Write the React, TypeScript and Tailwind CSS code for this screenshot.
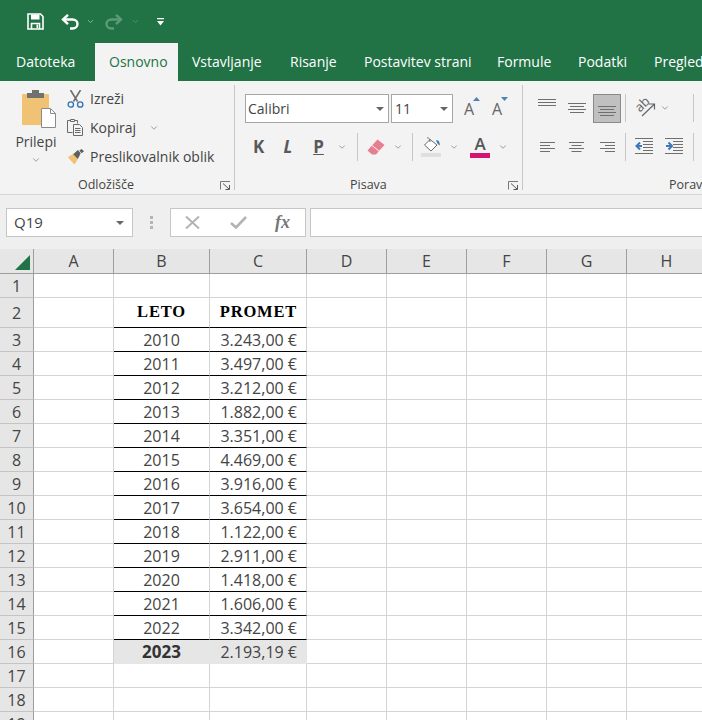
import { ChevronDown } from "lucide-react";

const ui = "font-['Open_Sans','Noto_Sans',sans-serif]";

const tabs = [
  { label: "Datoteka", w: "w-[95px]", pl: "pl-[16px]" },
  { label: "Osnovno", w: "w-[83px]", pl: "pl-[14px]", active: true },
  { label: "Vstavljanje", w: "w-[98px]", pl: "pl-[14px]" },
  { label: "Risanje", w: "w-[74px]", pl: "pl-[14px]" },
  { label: "Postavitev strani", w: "w-[133px]", pl: "pl-[14px]" },
  { label: "Formule", w: "w-[81px]", pl: "pl-[14px]" },
  { label: "Podatki", w: "w-[76px]", pl: "pl-[14px]" },
  { label: "Pregled", w: "w-[62px]", pl: "pl-[14px]" },
];

const rows: [string, string][] = [
  ["2010", "3.243,00 €"],
  ["2011", "3.497,00 €"],
  ["2012", "3.212,00 €"],
  ["2013", "1.882,00 €"],
  ["2014", "3.351,00 €"],
  ["2015", "4.469,00 €"],
  ["2016", "3.916,00 €"],
  ["2017", "3.654,00 €"],
  ["2018", "1.122,00 €"],
  ["2019", "2.911,00 €"],
  ["2020", "1.418,00 €"],
  ["2021", "1.606,00 €"],
  ["2022", "3.342,00 €"],
];

const columns = [
  { label: "A", w: "w-[80px]" },
  { label: "B", w: "w-[96px]" },
  { label: "C", w: "w-[97px]" },
  { label: "D", w: "w-[80px]" },
  { label: "E", w: "w-[80px]" },
  { label: "F", w: "w-[80px]" },
  { label: "G", w: "w-[80px]" },
  { label: "H", w: "w-[80px]" },
];

function Chev({ className = "" }: { className?: string }) {
  return <ChevronDown className={"h-[10px] w-[10px] text-[#666] " + className} strokeWidth={1.5} />;
}

function Caret() {
  return <div className="h-0 w-0 border-x-[4px] border-t-[4px] border-x-transparent border-t-[#666]" />;
}

function Launcher({ className = "" }: { className?: string }) {
  return (
    <svg className={className} width="11" height="9" viewBox="0 0 11 9" fill="none" stroke="#777">
      <path d="M.5 8.500V.5H10" />
      <path d="M3 2.500l6 5.500M9.500 4v4.500h-4" stroke="#555" />
    </svg>
  );
}

function Sep({ className = "h-[105px]" }: { className?: string }) {
  return <div className={"w-px bg-[#c6c6c6] " + className} />;
}

function SaveIcon() {
  return (
    <svg width="17" height="17" viewBox="0 0 17 17" fill="none">
      <path d="M1 1h12.5L16 3.500V16H1z" stroke="#fff" strokeWidth="1.600" />
      <path d="M4 1.500h8.500v5H4z" fill="#fff" />
      <path d="M4.500 16v-5.500h8V16" stroke="#fff" strokeWidth="1.600" />
      <path d="M9.500 11.500h1.500V15H9.500z" fill="#fff" />
    </svg>
  );
}

function UndoIcon({ color, flip }: { color: string; flip?: boolean }) {
  return (
    <svg width="19" height="16" viewBox="0 0 19 16" fill="none" className={flip ? "-scale-x-100" : ""}>
      <path d="M2 5.500h9.500c3 0 5 2 5 4.500s-2 4.500-5 4.500H9" stroke={color} strokeWidth="2.400" />
      <path d="M7 .8 2 5.500l5 4.700" stroke={color} strokeWidth="2.400" />
    </svg>
  );
}

function CustomizeIcon() {
  return (
    <svg width="7" height="8" viewBox="0 0 7 8">
      <path d="M0 0h7v1.300H0zM0 3h7L3.500 7.500z" fill="#fff" />
    </svg>
  );
}

function PasteIcon() {
  return (
    <svg className="ml-[6px]" width="34" height="38" viewBox="0 0 34 38">
      <path d="M1 4h25a1 1 0 0 1 1 1v30H1a1 1 0 0 1-1-1V5a1 1 0 0 1 1-1z" fill="#f0c274" />
      <path d="M5 8h17V3h-5V0h-7v3H5z" fill="#73716f" />
      <path d="M19.500 18.500h9l5 5v14h-14z" fill="#fff" stroke="#8a8a8a" />
      <path d="M28.500 18.500v5h5" fill="none" stroke="#8a8a8a" />
    </svg>
  );
}

function ScissorsIcon() {
  return (
    <svg width="17" height="18" viewBox="0 0 17 18" fill="none">
      <path d="M3.500 0 10.500 11.500M13.500 0 6.500 11.500" stroke="#6d6d6d" strokeWidth="1.600" />
      <circle cx="3.800" cy="14.500" r="2.700" stroke="#2f70b5" strokeWidth="1.300" />
      <circle cx="13.200" cy="14.500" r="2.700" stroke="#2f70b5" strokeWidth="1.300" />
    </svg>
  );
}

function CopyIcon() {
  return (
    <svg width="17" height="17" viewBox="0 0 17 17" fill="none" stroke="#6a6a6a">
      <path d="M5.500 13.500H.5V1.500h3M7.500 1.500h3v3" />
      <path d="M3.500 2.500v-2h4v2z" />
      <path d="M6.500 5.500h6l3 3v8h-9z" fill="#f3f3f3" />
      <path d="M8 9.500h5.500M8 11.500h5.500M8 13.500h5.500" />
    </svg>
  );
}

function PainterIcon() {
  return (
    <svg width="18" height="16" viewBox="0 0 18 17">
      <path d="M.500 8.500 6.500 5 11 10.500 7.500 16.500C5 14 2 11 .500 8.500z" fill="#f0c274" />
      <path d="M6 5.500 11 1l3 3.500-3 6z" fill="#5f5f5f" />
      <path d="M12.500 1.500 15 0l2.500 2.500-2.500 2z" fill="#5f5f5f" />
    </svg>
  );
}

function GrowA({ down }: { down?: boolean }) {
  return (
    <div className="relative flex h-[17px] w-[16px] items-end justify-start">
      <span className="text-[16px] leading-[15px] font-medium text-[#666]">A</span>
      <svg className="absolute -top-[3px] right-0" width="7" height="4" viewBox="0 0 7 4">
        <path d={down ? "M0 0h7L3.500 4z" : "M0 4h7L3.500 0z"} fill="#4f81b5" />
      </svg>
    </div>
  );
}

function EraserIcon() {
  return (
    <svg width="18" height="16" viewBox="0 0 18 16">
      <path d="M10.500.5 17.500 6 12 12 5 6.500z" fill="#e67e90" />
      <path d="M5 6.500 12 12 9 15.500H5L.5 11.500z" fill="#e67e90" />
      <path d="M5 6.500 12 12" stroke="#f3f3f3" strokeWidth="1" />
    </svg>
  );
}

function BucketIcon() {
  return (
    <div className="flex flex-col items-center">
      <svg width="20" height="15" viewBox="0 0 20 15" fill="none">
        <path d="M9 2.500 16 8l-6 6-6.500-6z" fill="#fff" stroke="#6a6a6a" />
        <path d="M6 1c1.500-1 3 1 3 4" stroke="#6a6a6a" />
        <path d="M15 3.500c2-.8 4 1 3.800 5l-2-1.500z" fill="#3d79b8" />
      </svg>
      <div className="mt-[1px] h-[4px] w-[20px] bg-[#dfdfdf]" />
    </div>
  );
}

function Lines({ widths }: { widths: number[] }) {
  const w = Math.max(...widths);
  return (
    <svg className="block" width={w} height={widths.length * 3} stroke="#6f6f6f">
      {widths.map((x, i) => (
        <line key={i} x1={(w - x) / 2} x2={(w + x) / 2} y1={i * 3 + 0.5} y2={i * 3 + 0.5} />
      ))}
    </svg>
  );
}

function HAlign({ align }: { align: "l" | "c" | "r" }) {
  const wide = [15, 10, 15, 10];
  return (
    <svg className="block" width="15" height="11" stroke="#6f6f6f">
      {wide.map((x, i) => {
        const x1 = align === "l" ? 0 : align === "c" ? (15 - x) / 2 : 15 - x;
        return <line key={i} x1={x1} x2={x1 + x} y1={i * 3 + 0.5} y2={i * 3 + 0.5} />;
      })}
    </svg>
  );
}

function OrientIcon() {
  return (
    <svg width="21" height="19" viewBox="0 0 21 19" fill="none">
      <text x="0" y="11" fontSize="13" fill="#666" transform="rotate(-45 7 7)" className={ui}>ab</text>
      <path d="M7 18 19 6.500M14 6h5.500v5.500" stroke="#666" strokeWidth="1.200" />
    </svg>
  );
}

function IndentIcon({ right }: { right?: boolean }) {
  return (
    <svg width="18" height="16" viewBox="0 0 18 16" fill="none">
      <path d="M0 .5h18M0 15.500h18M8 3.500h10M8 6.500h10M8 9.500h10M8 12.500h10" stroke="#6f6f6f" />
      <path d={right ? "M1 8h5M3.500 4.500 7 8l-3.500 3.500" : "M7 8H2M5 4.500 1.500 8 5 11.500"} stroke="#3d79b8" strokeWidth="2" />
    </svg>
  );
}

function HeaderRow() {
  return (
    <div className="flex h-[25px] bg-[#e6e6e6] text-[16px] text-[#444]">
      <div className="flex w-[34px] shrink-0 items-end justify-end border-r border-b border-[#9e9e9e] pr-[3px] pb-[3px]">
        <div className="h-0 w-0 border-b-[15px] border-l-[15px] border-b-[#217346] border-l-transparent" />
      </div>
      {columns.map((c) => (
        <div key={c.label} className={"flex shrink-0 items-center justify-center border-r border-b border-[#9e9e9e] " + c.w}>
          {c.label}
        </div>
      ))}
    </div>
  );
}

type RowProps = {
  n: number;
  h?: string;
  b?: React.ReactNode;
  c?: React.ReactNode;
  ruled?: boolean;
  total?: boolean;
};

function SheetRow({ n, h = "h-[24px]", b, c, ruled, total }: RowProps) {
  const tableEdge = ruled ? "border-b-black" : "border-b-[#d4d4d4]";
  const fill = total ? "bg-[#e7e6e6] border-r-[#e7e6e6] border-b-[#e7e6e6]" : "border-r-[#d4d4d4] " + tableEdge;
  return (
    <div className={"flex " + h}>
      <div className="flex w-[34px] shrink-0 items-center justify-center border-r border-b border-r-[#9e9e9e] border-b-[#c4c4c4] bg-[#e6e6e6] text-[16px] text-[#444]">
        {n}
      </div>
      {columns.map((col, i) => {
        const inTable = i === 1 || i === 2;
        return (
          <div
            key={col.label}
            className={
              "flex shrink-0 items-center whitespace-nowrap border-r border-b " +
              col.w +
              " " +
              (inTable ? fill : "border-[#d4d4d4]") +
              " " +
              (i === 1 ? "justify-center" : "justify-end pr-[9px]")
            }
          >
            {i === 1 ? b : i === 2 ? c : null}
          </div>
        );
      })}
    </div>
  );
}

export default function App() {
  return (
    <div className={"h-[720px] w-[702px] overflow-hidden bg-white " + ui}>
      {/* title bar + tabs */}
      <div className="bg-[#217346]">
        <div className="flex h-[43px] items-center pl-[27px]">
          <SaveIcon />
          <div className="ml-[17px]">
            <UndoIcon color="#fff" />
          </div>
          <ChevronDown className="ml-[6px] h-[9px] w-[9px] text-[#a5c7b4]" />
          <div className="ml-[9px]">
            <UndoIcon color="#5d9a78" flip />
          </div>
          <ChevronDown className="ml-[8px] h-[9px] w-[9px] text-[#5d9a78]" />
          <div className="ml-[17px]">
            <CustomizeIcon />
          </div>
        </div>
        <div className="flex h-[38px] overflow-hidden text-[14px] text-white">
          {tabs.map((t) => (
            <div
              key={t.label}
              className={
                "flex shrink-0 items-center whitespace-nowrap pb-[2px] " + t.w + " " + t.pl + " " +
                (t.active ? "bg-[#f3f3f3] text-[#217346]" : "")
              }
            >
              {t.label}
            </div>
          ))}
        </div>
      </div>

      {/* ribbon */}
      <div className="flex h-[114px] overflow-hidden border-b border-[#d6d6d6] bg-[#f3f3f3] text-[14px] text-[#444]">
        <div className="flex w-[234px] shrink-0 flex-col">
          <div className="flex flex-1">
            <div className="flex w-[66px] flex-col items-center pt-[9px] pl-[6px]">
              <PasteIcon />
              <span className="mt-[4px] leading-[20px]">Prilepi</span>
              <Chev className="mt-[3px]" />
            </div>
            <div className="flex flex-col pt-[3px]">
              <div className="flex h-[29px] items-center">
                <div className="flex w-[24px] justify-start pl-[1px]"><ScissorsIcon /></div>
                Izreži
              </div>
              <div className="flex h-[29px] items-center">
                <div className="flex w-[24px] justify-start pl-[1px]"><CopyIcon /></div>
                Kopiraj
                <Chev className="ml-[13px]" />
              </div>
              <div className="flex h-[29px] items-center whitespace-nowrap">
                <div className="flex w-[24px] justify-start pl-[1px]"><PainterIcon /></div>
                Preslikovalnik oblik
              </div>
            </div>
          </div>
          <div className="flex h-[17px] items-center text-[12.5px]">
            <span className="ml-[78px]">Odložišče</span>
            <Launcher className="mr-[3px] ml-auto" />
          </div>
        </div>
        <div className="mt-[4px]"><Sep /></div>

        <div className="flex w-[287px] shrink-0 flex-col">
          <div className="flex flex-1 flex-col pt-[13px] pl-[10px]">
            <div className="flex items-center">
              <div className="flex h-[29px] w-[144px] items-center justify-between border border-[#a6a6a6] bg-white pr-[4px] pl-[2px]">
                Calibri
                <Caret />
              </div>
              <div className="ml-[2px] flex h-[29px] w-[62px] items-center justify-between border border-[#a6a6a6] bg-white pr-[4px] pl-[3px]">
                11
                <Caret />
              </div>
              <div className="ml-[11px]"><GrowA /></div>
              <div className="ml-[12px]"><GrowA down /></div>
            </div>
            <div className="mt-[10px] flex h-[28px] items-center text-[#595959]">
              <span className="ml-[8px] w-[10px] text-center text-[17px] font-bold">K</span>
              <span className="ml-[20px] w-[10px] text-center text-[17px] font-bold italic">L</span>
              <span className="ml-[20px] w-[11px] text-center text-[17px] font-bold underline">P</span>
              <Chev className="ml-[13px]" />
              <Sep className="ml-[10px] h-[28px]" />
              <div className="ml-[9px]"><EraserIcon /></div>
              <Chev className="ml-[8px]" />
              <Sep className="ml-[9px] h-[28px]" />
              <div className="ml-[8px]"><BucketIcon /></div>
              <Chev className="ml-[8px]" />
              <div className="ml-[11px] flex w-[20px] flex-col items-center">
                <span className="text-[17px] leading-[16px] font-semibold text-[#555]">A</span>
                <div className="mt-[1px] h-[5px] w-[20px] bg-[#d6146f]" />
              </div>
              <Chev className="ml-[8px]" />
            </div>
          </div>
          <div className="flex h-[17px] items-center text-[12.5px]">
            <span className="ml-[115px]">Pisava</span>
            <Launcher className="mr-[3px] ml-auto" />
          </div>
        </div>
        <div className="mt-[4px]"><Sep /></div>

        <div className="flex flex-1 flex-col">
          <div className="flex flex-1 pt-[13px] pl-[14px]">
            <div className="flex w-[84px] flex-col">
              <div className="flex h-[29px] items-start">
                <div className="mt-[5px] ml-[1px]"><Lines widths={[18, 18, 18]} /></div>
                <div className="mt-[9px] ml-[12px]"><Lines widths={[18, 14, 18, 14]} /></div>
                <div className="ml-[7px] flex h-[29px] w-[28px] shrink-0 items-end justify-center border border-[#8a8a8a] bg-[#c0c0c0] pb-[4px]">
                  <Lines widths={[18, 14, 18, 14]} />
                </div>
              </div>
              <div className="mt-[19px] flex">
                <div className="ml-[3px]"><HAlign align="l" /></div>
                <div className="ml-[14px]"><HAlign align="c" /></div>
                <div className="ml-[16px]"><HAlign align="r" /></div>
              </div>
            </div>
            <div className="ml-[4px] flex flex-col">
              <Sep className="h-[28px]" />
              <Sep className="mt-[11px] h-[28px]" />
            </div>
            <div className="ml-[9px] flex w-[48px] flex-col">
              <div className="flex h-[29px] items-center pb-[2px]">
                <OrientIcon />
                <Chev className="ml-[4px]" />
              </div>
              <div className="mt-[15px] flex">
                <IndentIcon />
                <div className="ml-[12px]"><IndentIcon right /></div>
              </div>
            </div>
            <div className="ml-[10px] flex flex-col">
              <Sep className="h-[28px]" />
              <Sep className="mt-[11px] h-[28px]" />
            </div>
          </div>
          <div className="flex h-[17px] items-center text-[12.5px]">
            <span className="ml-[146px] whitespace-nowrap">Poravnava</span>
          </div>
        </div>
      </div>

      {/* formula bar */}
      <div className="flex h-[54px] items-start bg-[#efefef] pt-[13px] pb-[12px]">
        <div className="ml-[6px] flex h-[29px] w-[127px] items-center justify-between border border-[#c6c6c6] bg-white pr-[8px] pl-[7px] text-[15px] text-[#444]">
          Q19
          <Caret />
        </div>
        <div className="ml-[17px] flex h-[29px] flex-col justify-center gap-[2px]">
          <div className="h-[3px] w-[3px] bg-[#b4b4b4]" />
          <div className="h-[3px] w-[3px] bg-[#b4b4b4]" />
          <div className="h-[3px] w-[3px] bg-[#b4b4b4]" />
        </div>
        <div className="ml-[17px] flex h-[29px] w-[136px] items-center border border-[#c6c6c6] bg-white">
          <svg className="ml-[14px]" width="15" height="13" viewBox="0 0 15 13" fill="none" stroke="#b4b4b4" strokeWidth="2">
            <path d="M1 .5 14 12.500M14 .5 1 12.500" />
          </svg>
          <svg className="ml-[30px]" width="17" height="13" viewBox="0 0 17 13" fill="none" stroke="#b4b4b4" strokeWidth="2.600">
            <path d="M1 7l5 4.500L16 1" />
          </svg>
          <span className="ml-[28px] font-['Liberation_Serif',serif] text-[18px] font-bold text-[#777] italic">fx</span>
        </div>
        <div className="ml-[4px] h-[29px] flex-1 border border-r-0 border-[#c6c6c6] bg-white" />
      </div>

      {/* sheet */}
      <div className="text-[16px] text-[#444]">
        <HeaderRow />
        <SheetRow n={1} />
        <SheetRow
          n={2}
          h="h-[30px]"
          ruled
          b={<span className="font-['Liberation_Serif',serif] text-[16.5px] font-bold tracking-[0.8px] text-black">LETO</span>}
          c={<span className="font-['Liberation_Serif',serif] text-[16.5px] font-bold tracking-[0.8px] text-black">PROMET</span>}
        />
        {rows.map((r, i) => (
          <SheetRow key={r[0]} n={i + 3} ruled b={r[0]} c={r[1]} />
        ))}
        <SheetRow n={16} total b={<span className="text-[17px] font-bold text-[#333]">2023</span>} c="2.193,19 €" />
        <SheetRow n={17} />
        <SheetRow n={18} />
        <SheetRow n={19} />
      </div>
    </div>
  );
}
